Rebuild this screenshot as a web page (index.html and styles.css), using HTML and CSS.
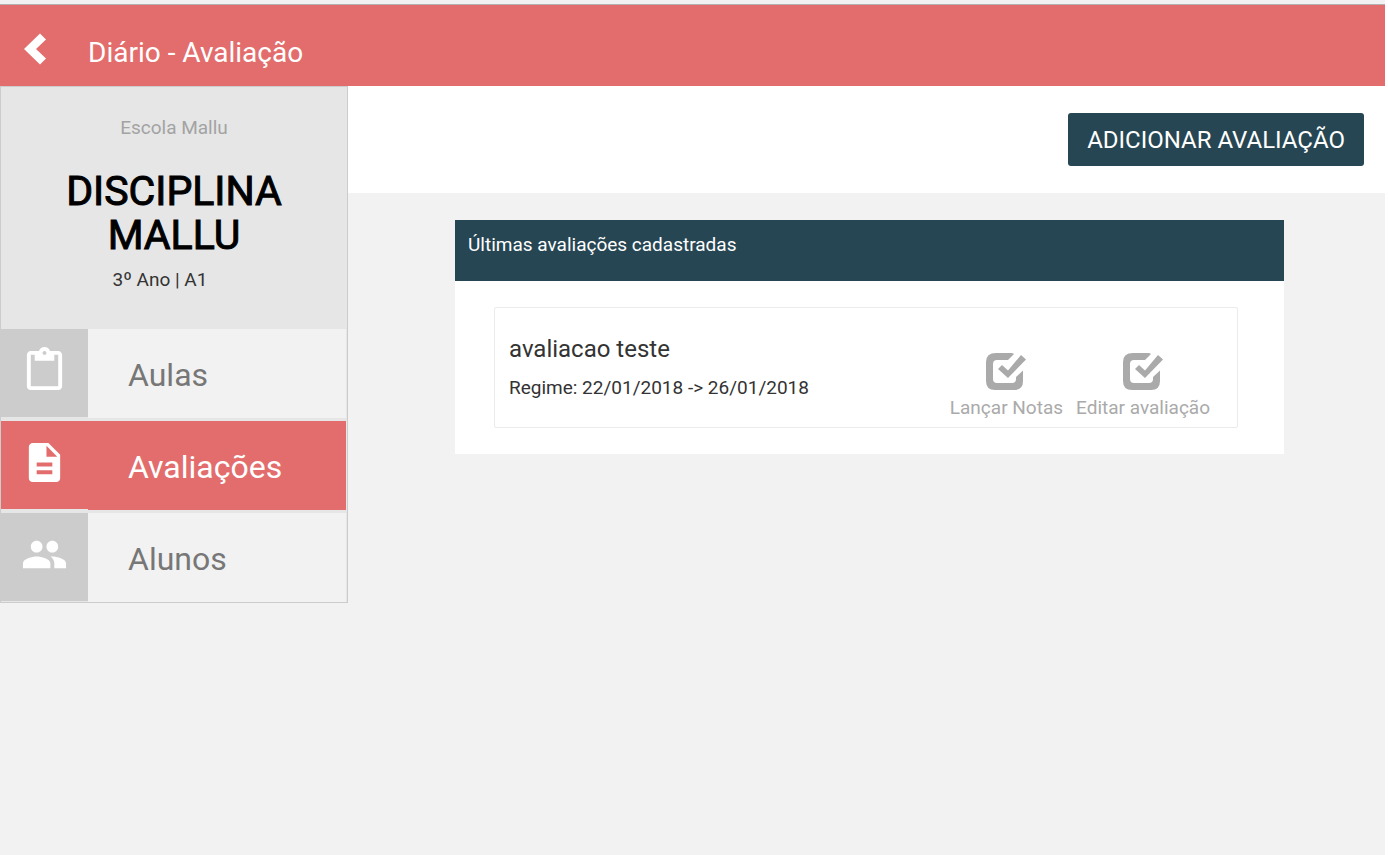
FILE: index.html
```html
<!DOCTYPE html>
<html lang="pt-BR">
<head>
<meta charset="utf-8">
<title>Diário - Avaliação</title>
<link rel="stylesheet" href="styles.css">
</head>
<body>
<header class="topbar">
  <button class="back" type="button" aria-label="Voltar">
    <svg class="back-icon" viewBox="0 0 22 32"><path d="M16 0.5 22 6.500 12 16 22 25.500 16 31.500 0 16z" fill="currentColor"/></svg>
  </button>
  <h1 class="topbar-title">Diário - Avaliação</h1>
</header>
<div class="layout">
  <aside class="sidebar">
    <div class="course">
      <p class="school">Escola Mallu</p>
      <h2 class="subject">DISCIPLINA MALLU</h2>
      <p class="group">3º Ano | A1</p>
    </div>
    <nav class="menu">
      <a class="menu-item" href="#aulas">
        <span class="menu-icon"><svg viewBox="0 0 24 24"><path fill="currentColor" d="M19 2h-4.180C14.400.84 13.300 0 12 0S9.600.84 9.180 2H5c-1.100 0-2 .9-2 2v16c0 1.100.9 2 2 2h14c1.100 0 2-.9 2-2V4c0-1.100-.9-2-2-2zm-7 0c.55 0 1 .45 1 1s-.45 1-1 1-1-.45-1-1 .45-1 1-1zm7 18H5V4h2v3h10V4h2v16z"/></svg></span>
        <span class="menu-label">Aulas</span>
      </a>
      <a class="menu-item active" href="#avaliacoes" aria-current="page">
        <span class="menu-icon"><svg viewBox="0 0 24 24"><path fill="currentColor" d="M14 2H6c-1.100 0-1.990.9-1.990 2L4 20c0 1.100.89 2 1.990 2H18c1.100 0 2-.9 2-2V8l-6-6zm2 16H8v-2h8v2zm0-4H8v-2h8v2zm-3-5V3.500L18.500 9H13z"/></svg></span>
        <span class="menu-label">Avaliações</span>
      </a>
      <a class="menu-item" href="#alunos">
        <span class="menu-icon"><svg viewBox="0 0 24 24"><path fill="currentColor" d="M16 11c1.660 0 2.990-1.340 2.990-3S17.660 5 16 5c-1.660 0-3 1.340-3 3s1.340 3 3 3zm-8 0c1.660 0 2.990-1.340 2.990-3S9.660 5 8 5C6.340 5 5 6.340 5 8s1.340 3 3 3zm0 2c-2.330 0-7 1.170-7 3.500V19h14v-2.500c0-2.330-4.670-3.500-7-3.500zm8 0c-.29 0-.62.02-.97.05 1.160.84 1.970 1.970 1.970 3.450V19h6v-2.500c0-2.330-4.670-3.500-7-3.500z"/></svg></span>
        <span class="menu-label">Alunos</span>
      </a>
    </nav>
  </aside>
  <main class="content">
    <div class="toolbar"><button class="add" type="button">ADICIONAR AVALIAÇÃO</button></div>
    <section class="panel">
      <h2 class="panel-title">Últimas avaliações cadastradas</h2>
      <div class="panel-body">
        <article class="card">
          <div class="card-info">
            <h3 class="card-title">avaliacao teste</h3>
            <p class="card-text">Regime: 22/01/2018 -&gt; 26/01/2018</p>
          </div>
          <div class="actions">
            <a class="action" href="#notas">
              <svg class="check" viewBox="0 0 40 37"><path fill="currentColor" d="M10 0h15q2 0 3 1l-6 6H11q-4 0-4 4v15q0 4 4 4h15q4 0 4-4v-2l7-6.500V28q0 9-9 9H9q-9 0-9-9V9q0-9 10-9zM12 16l4-4 6 5.500L35 2l5 4.500L22 25z"/></svg>
              <span>Lançar Notas</span>
            </a>
            <a class="action" href="#editar">
              <svg class="check" viewBox="0 0 40 37"><path fill="currentColor" d="M10 0h15q2 0 3 1l-6 6H11q-4 0-4 4v15q0 4 4 4h15q4 0 4-4v-2l7-6.500V28q0 9-9 9H9q-9 0-9-9V9q0-9 10-9zM12 16l4-4 6 5.500L35 2l5 4.500L22 25z"/></svg>
              <span>Editar avaliação</span>
            </a>
          </div>
        </article>
      </div>
    </section>
  </main>
</div>
</body>
</html>
```
FILE: styles.css
```css
* { box-sizing: border-box; }
html { background: #fff; }
body {
  margin: 0 3px 0 0;
  min-height: 100vh;
  background: #f2f2f2;
  font-family: Roboto, "Liberation Sans", sans-serif;
  font-size: 19px;
  line-height: 28px;
  color: #333;
}
h1, h2, h3, p { margin: 0; font-weight: 400; }
a { color: inherit; text-decoration: none; }
svg { display: block; }
button { border: 0; font: inherit; cursor: pointer; }

.topbar {
  display: flex;
  align-items: center;
  height: 86px;
  padding: 16px 24px 0;
  gap: 42px;
  border-top: 4px solid #f2f2f2;
  background: #e26d6c;
  box-shadow: inset 0 1px #b4b0b0;
  color: #fff;
}
.back { padding: 0 0 8px; background: none; color: #fff; }
.back-icon { width: 22px; height: 32px; }
.topbar-title { font-size: 28px; line-height: 36px; }

.layout { display: flex; align-items: flex-start; }
.sidebar {
  flex: 0 0 348px;
  border: 1px solid #ccc;
  background: #e6e6e6;
}
.course { padding: 27px 40px 35px; text-align: center; }
.school { color: #a3a3a3; }
.subject {
  margin: 27px 0 9px;
  font-size: 41px;
  line-height: 44px;
  -webkit-text-stroke: 1px #000;
  color: #000;
}
.group { padding-right: 28px; }
.menu { display: grid; gap: 3px; padding-right: 1px; }
.menu-item {
  display: flex;
  height: 89px;
  background: #f2f2f2;
  color: #777;
  font-size: 32px;
}
.menu-icon {
  display: flex;
  justify-content: center;
  width: 87px;
  padding-top: 18px;
  border-bottom: 1px solid #e6e6e6;
  background: #ccc;
  color: #fff;
}
.menu-icon svg { width: 47px; height: 47px; }
.menu-label { padding: 26px 0 0 40px; line-height: 40px; }
.active, .active .menu-icon { background: #e26d6c; color: #fff; }

.content { flex: 1; min-width: 0; }
.toolbar {
  display: flex;
  justify-content: flex-end;
  padding: 27px 21px;
  background: #fff;
}
.add {
  height: 53px;
  padding: 0 19px;
  border-radius: 3px;
  background: #264653;
  color: #fff;
  font-size: 24px;
}
.panel { margin: 27px 101px 0 107px; background: #fff; }
.panel-title {
  height: 61px;
  padding: 11px 13px;
  background: #264653;
  color: #fff;
  font-size: 19px;
}
.panel-body { padding: 26px 46px 26px 39px; }
.card {
  display: flex;
  justify-content: space-between;
  min-height: 121px;
  padding: 24px 27px 5px 14px;
  border: 1px solid #ebebeb;
  border-radius: 2px;
}
.card-title { font-size: 24px; line-height: 34px; }
.card-text { margin-top: 8px; }
.actions { display: flex; gap: 13px; padding-top: 21px; color: #aaa; }
.action { display: flex; flex-direction: column; align-items: center; gap: 4px; }
.check { width: 40px; height: 37px; }
```
